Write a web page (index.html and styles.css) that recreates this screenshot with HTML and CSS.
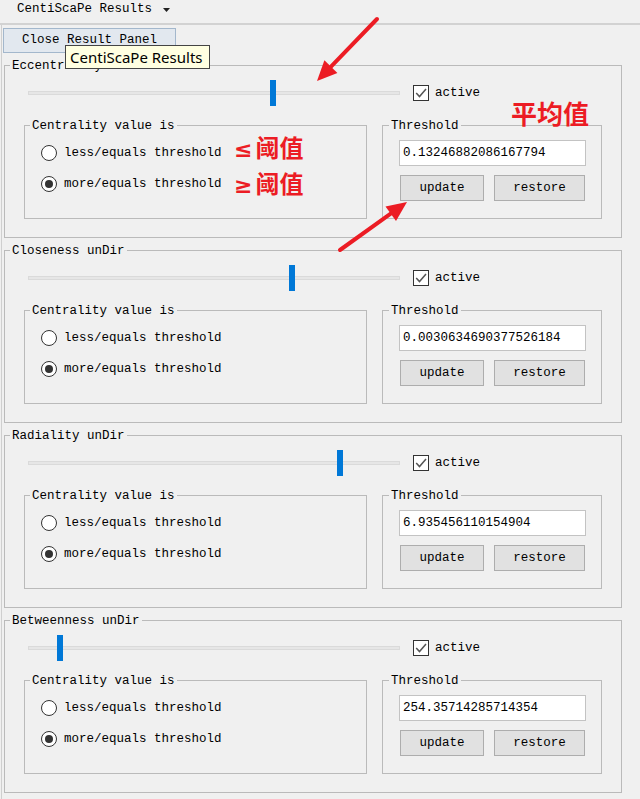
FILE: index.html
```html
<!DOCTYPE html>
<html>
<head>
<meta charset="utf-8">
<link rel="stylesheet" href="styles.css">
</head>
<body>
<div class="topbar"><span class="tab">CentiScaPe Results</span><svg class="caret" width="7" height="4" viewBox="0 0 7 4"><path d="M0 0H7L3.5 4Z" fill="#222"/></svg></div>
<div class="main">
  <div class="toolbar"><button class="close-btn">Close Result Panel</button></div>

  <fieldset class="panel">
    <legend>Eccentricity unDir</legend>
    <div class="panel-body">
      <div class="slider-row">
        <div class="slider"><div class="track"></div><div class="thumb" style="left:246px"></div></div>
        <div class="check"><span class="box"><svg width="14" height="14" viewBox="0 0 14 14"><path d="M2.2 7L5.5 10.6L12 3" fill="none" stroke="#555" stroke-width="1.5"/></svg></span><span>active</span></div>
      </div>
      <div class="groups">
        <fieldset class="group centrality">
          <legend>Centrality value is</legend>
          <div class="radio-row"><span class="radio"></span><span>less/equals threshold</span></div>
          <div class="radio-row"><span class="radio on"></span><span>more/equals threshold</span></div>
        </fieldset>
        <fieldset class="group threshold">
          <legend>Threshold</legend>
          <div class="input">0.13246882086167794</div>
          <div class="btns"><button class="btn update">update</button><button class="btn restore">restore</button></div>
        </fieldset>
      </div>
    </div>
  </fieldset>

  <fieldset class="panel">
    <legend>Closeness unDir</legend>
    <div class="panel-body">
      <div class="slider-row">
        <div class="slider"><div class="track"></div><div class="thumb" style="left:265px"></div></div>
        <div class="check"><span class="box"><svg width="14" height="14" viewBox="0 0 14 14"><path d="M2.2 7L5.5 10.6L12 3" fill="none" stroke="#555" stroke-width="1.5"/></svg></span><span>active</span></div>
      </div>
      <div class="groups">
        <fieldset class="group centrality">
          <legend>Centrality value is</legend>
          <div class="radio-row"><span class="radio"></span><span>less/equals threshold</span></div>
          <div class="radio-row"><span class="radio on"></span><span>more/equals threshold</span></div>
        </fieldset>
        <fieldset class="group threshold">
          <legend>Threshold</legend>
          <div class="input">0.0030634690377526184</div>
          <div class="btns"><button class="btn update">update</button><button class="btn restore">restore</button></div>
        </fieldset>
      </div>
    </div>
  </fieldset>

  <fieldset class="panel">
    <legend>Radiality unDir</legend>
    <div class="panel-body">
      <div class="slider-row">
        <div class="slider"><div class="track"></div><div class="thumb" style="left:313px"></div></div>
        <div class="check"><span class="box"><svg width="14" height="14" viewBox="0 0 14 14"><path d="M2.2 7L5.5 10.6L12 3" fill="none" stroke="#555" stroke-width="1.5"/></svg></span><span>active</span></div>
      </div>
      <div class="groups">
        <fieldset class="group centrality">
          <legend>Centrality value is</legend>
          <div class="radio-row"><span class="radio"></span><span>less/equals threshold</span></div>
          <div class="radio-row"><span class="radio on"></span><span>more/equals threshold</span></div>
        </fieldset>
        <fieldset class="group threshold">
          <legend>Threshold</legend>
          <div class="input">6.935456110154904</div>
          <div class="btns"><button class="btn update">update</button><button class="btn restore">restore</button></div>
        </fieldset>
      </div>
    </div>
  </fieldset>

  <fieldset class="panel">
    <legend>Betweenness unDir</legend>
    <div class="panel-body">
      <div class="slider-row">
        <div class="slider"><div class="track"></div><div class="thumb" style="left:33px"></div></div>
        <div class="check"><span class="box"><svg width="14" height="14" viewBox="0 0 14 14"><path d="M2.2 7L5.5 10.6L12 3" fill="none" stroke="#555" stroke-width="1.5"/></svg></span><span>active</span></div>
      </div>
      <div class="groups">
        <fieldset class="group centrality">
          <legend>Centrality value is</legend>
          <div class="radio-row"><span class="radio"></span><span>less/equals threshold</span></div>
          <div class="radio-row"><span class="radio on"></span><span>more/equals threshold</span></div>
        </fieldset>
        <fieldset class="group threshold">
          <legend>Threshold</legend>
          <div class="input">254.35714285714354</div>
          <div class="btns"><button class="btn update">update</button><button class="btn restore">restore</button></div>
        </fieldset>
      </div>
    </div>
  </fieldset>
</div>

<div class="tooltip">CentiScaPe Results</div>
<div class="note note-avg">平均值</div>
<div class="note note-le"><span class="sym">≤</span>阈值</div>
<div class="note note-ge"><span class="sym">≥</span>阈值</div>
<svg class="arrows" width="640" height="799" viewBox="0 0 640 799">
  <line x1="377" y1="19" x2="331" y2="66.6" stroke="#ec1c24" stroke-width="4" stroke-linecap="round"/>
  <polygon points="317,81 337.4,72.9 324.4,60.3" fill="#ec1c24"/>
  <line x1="340" y1="250" x2="390.7" y2="213.7" stroke="#ec1c24" stroke-width="4" stroke-linecap="round"/>
  <polygon points="407,202 396,221 385.5,206.4" fill="#ec1c24"/>
</svg>
</body>
</html>
```
FILE: styles.css
```css
html, body {
  margin: 0;
  padding: 0;
}
body {
  background: #f0f0f0;
  font-family: "Liberation Mono", "DejaVu Sans Mono", monospace;
  font-size: 12.5px;
  color: #000;
  width: 640px;
  height: 799px;
  overflow: hidden;
  position: relative;
}
.topbar {
  height: 23px;
  line-height: 19px;
  padding-left: 17px;
  border-bottom: 2px solid #d2d2d2;
  display: flex;
  align-items: flex-start;
}
.caret {
  margin-left: 11px;
  margin-top: 8px;
}
.main {
  margin-left: 1px;
  border-left: 1px solid #cfcfcf;
  height: 774px;
}
.toolbar {
  padding-top: 3px;
  display: flex;
}
button {
  font: inherit;
  color: inherit;
  padding: 0;
  margin: 0;
}
.close-btn {
  margin-left: 1px;
  width: 173px;
  height: 25px;
  box-sizing: border-box;
  border: 1px solid #a3b7cc;
  background: #e2e8ef;
  line-height: 23px;
}
fieldset {
  margin: 0;
  padding: 0;
  min-width: 0;
  border: 1px solid #bababa;
}
legend {
  padding: 0 2px;
  margin-left: 5px;
  line-height: 17px;
  height: 14px;
}
.panel {
  margin: 5px 0 0 2px;
  width: 618px;
  box-sizing: border-box;
}
.panel-body {
  padding: 8px 19px 18px 19px;
}
.slider-row {
  display: flex;
  align-items: center;
  height: 26px;
}
.slider {
  position: relative;
  width: 380px;
  height: 26px;
  margin-right: 9px;
}
.track {
  margin: 11px 4px 0 4px;
  height: 4px;
  box-sizing: border-box;
  background: #e6e6e6;
  border: 1px solid #dadada;
}
.thumb {
  position: absolute;
  top: 0;
  width: 6px;
  height: 26px;
  background: #0078d7;
}
.check {
  display: flex;
  align-items: center;
}
.box {
  width: 16px;
  height: 16px;
  box-sizing: border-box;
  border: 1px solid #333;
  background: #fff;
  margin-right: 6px;
  display: flex;
  align-items: center;
  justify-content: center;
}
.groups {
  display: flex;
  gap: 15px;
  margin-top: 12px;
}
.group {
  box-sizing: border-box;
}
.centrality {
  width: 343px;
  padding: 13px 0 26px 16px;
}
.centrality legend {
  margin-left: -11px;
}
.threshold {
  width: 220px;
  padding: 8px 0 0 16px;
}
.threshold legend {
  margin-left: -10px;
}
.radio-row {
  display: flex;
  align-items: center;
  height: 16px;
}
.radio-row + .radio-row {
  margin-top: 15px;
}
.radio {
  width: 16px;
  height: 16px;
  box-sizing: border-box;
  border: 1px solid #333;
  border-radius: 50%;
  background: #fff;
  margin-right: 7px;
  display: flex;
  align-items: center;
  justify-content: center;
}
.radio.on::after {
  content: "";
  width: 8px;
  height: 8px;
  border-radius: 50%;
  background: #333;
}
.input {
  width: 187px;
  height: 26px;
  box-sizing: border-box;
  border: 1px solid #c3c3c3;
  background: #fff;
  line-height: 24px;
  padding-left: 3px;
}
.btns {
  display: flex;
  margin-top: 9px;
}
.btn {
  height: 26px;
  box-sizing: border-box;
  border: 1px solid #adadad;
  background: #e1e1e1;
}
.update {
  width: 84px;
  margin-left: 1px;
}
.restore {
  width: 91px;
  margin-left: 10px;
}
.tooltip {
  position: absolute;
  left: 65px;
  top: 45px;
  width: 145px;
  height: 24px;
  box-sizing: border-box;
  border: 1px solid #444;
  background: #ffffe1;
  font-family: "Noto Sans", "Open Sans", sans-serif;
  font-size: 15px;
  line-height: 22px;
  padding-left: 4px;
  color: #000;
  white-space: nowrap;
}
.note {
  position: absolute;
  font-family: "Noto Sans CJK SC", "Noto Sans", sans-serif;
  font-weight: 700;
  color: #ec1c24;
  white-space: nowrap;
}
.sym {
  font-family: "DejaVu Sans", sans-serif;
  font-size: 22px;
  margin-right: 3px;
}
.note-avg {
  left: 511px;
  top: 98px;
  font-size: 26px;
  line-height: 30px;
}
.note-le {
  left: 234px;
  top: 133px;
  font-size: 24px;
  line-height: 28px;
}
.note-ge {
  left: 234px;
  top: 169px;
  font-size: 24px;
  line-height: 28px;
}
.arrows {
  position: absolute;
  left: 0;
  top: 0;
  pointer-events: none;
}
```
